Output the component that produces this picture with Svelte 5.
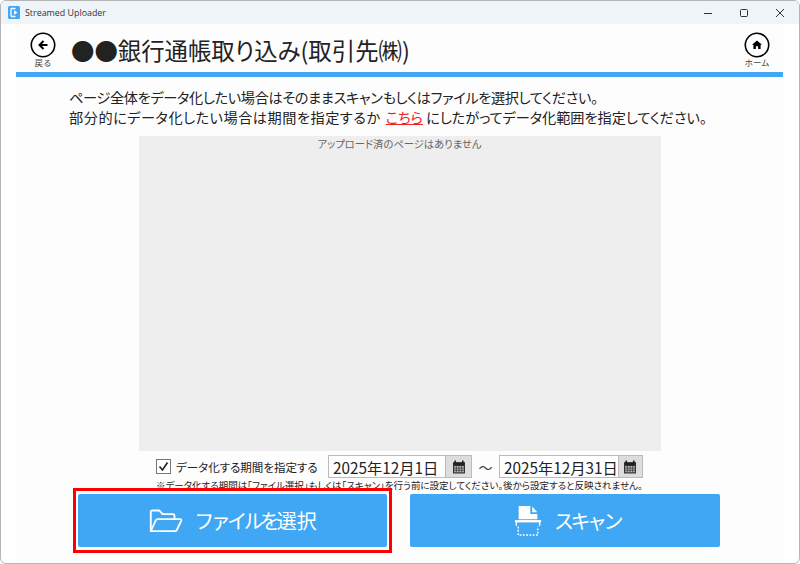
<script>
	const notice = '※データ化する期間は「ファイル選択」もしくは「スキャン」を行う前に設定してください。後から設定すると反映されません。';
</script>

<div class="window">
	<div class="titlebar">
		<svg class="appicon" width="12" height="13" viewBox="0 0 12 13">
			<rect x="0" y="0" width="12" height="13" rx="1.5" fill="#42a7f5" />
			<path d="M3 2.500h4.500M3 10.500h4.500M3 2.500v8" stroke="#fff" stroke-width="1.300" fill="none" />
			<path d="M6 4.200l3.500 2.300L6 8.800z" fill="#fff" />
		</svg>
		<span class="apptitle">Streamed Uploader</span>
		<div class="controls">
			<svg width="10" height="10" viewBox="0 0 10 10"><path d="M1 5.500h8" stroke="#333" stroke-width="1" /></svg>
			<svg width="10" height="10" viewBox="0 0 10 10"><rect x="1.500" y="1.500" width="7" height="7" rx="1" fill="none" stroke="#333" /></svg>
			<svg width="10" height="10" viewBox="0 0 10 10"><path d="M1 1l8 8M9 1l-8 8" stroke="#333" stroke-width="1" /></svg>
		</div>
	</div>

	<main class="content">
		<header class="pagehead">
			<button class="navbtn">
				<svg width="26" height="26" viewBox="0 0 26 26">
					<circle cx="13" cy="13" r="11.700" fill="#fff" stroke="#000" stroke-width="1.600" />
					<path d="M13.500 9l-4 4 4 4M9.500 13h8" fill="none" stroke="#000" stroke-width="2" />
				</svg>
				<span>戻る</span>
			</button>
			<h1>●●銀行通帳取り込み(取引先㈱)</h1>
			<button class="navbtn">
				<svg width="26" height="26" viewBox="0 0 26 26">
					<circle cx="13" cy="13" r="11.700" fill="#fff" stroke="#000" stroke-width="1.600" />
					<path d="M13 8.500l-5 4.300h1.400v4.200h2.500v-2.800h2.200v2.800h2.500v-4.200h1.400z" fill="#000" />
				</svg>
				<span>ホーム</span>
			</button>
		</header>
		<div class="rule"></div>

		<p class="intro">
			<span class="line1">ページ全体をデータ化したい場合はそのままスキャンもしくはファイルを選択してください。</span><br />
			<span class="line2">部分的にデータ化したい場合は期間を指定するか</span> <a href="#top">こちら</a> <span class="line3">にしたがってデータ化範囲を指定してください。</span>
		</p>

		<div class="preview">アップロード済のページはありません</div>

		<div class="period">
			<span class="check">
				<svg width="13" height="13" viewBox="0 0 13 13"><path d="M2.500 6.500l3 3.500 5-7.500" fill="none" stroke="#222" stroke-width="1.600" /></svg>
			</span>
			<span class="checklabel">データ化する期間を指定する</span>
			<div class="datebox">
				<span class="datevalue">2025年12月1日</span>
				<span class="calbtn">{@render calendar()}</span>
			</div>
			<span class="tilde">～</span>
			<div class="datebox">
				<span class="datevalue">2025年12月31日</span>
				<span class="calbtn">{@render calendar()}</span>
			</div>
		</div>
		<p class="notice">{notice}</p>

		<div class="actions">
			<div class="highlight">
				<button class="action">
					<svg width="37" height="28" viewBox="0 0 40 30" fill="none" stroke="#fff" stroke-width="2" stroke-linejoin="round">
						<path d="M3 26V5.500c0-1 .8-1.800 1.800-1.800h7.500l3.500 3.800h11c1 0 1.800.8 1.800 1.800V13" />
						<path d="M3 26l5.500-12c.3-.7 1-1.100 1.700-1.100h24.500c1 0 1.600 1 1.200 1.900L31 25c-.3.600-1 1-1.700 1z" />
					</svg>
					<span><span class="kana">ファイルを</span>選択</span>
				</button>
			</div>
			<button class="action scan">
				<svg width="28" height="34" viewBox="0 0 30 34">
					<path d="M5 15V1H17.500v8.500H25V15z" fill="#fff" />
					<path d="M19.500 1.500l5.500 6h-5.500z" fill="#fff" />
					<rect x="1" y="16" width="28" height="2.500" fill="#fff" />
					<path d="M2.500 18v4M27.500 18v4" stroke="#fff" stroke-width="1.500" />
					<path d="M4.500 23v9h21v-9" fill="none" stroke="#fff" stroke-width="1.500" stroke-dasharray="2 1.500" />
				</svg>
				<span class="kana">スキャン</span>
			</button>
		</div>
	</main>
</div>

{#snippet calendar()}
	<svg width="14" height="14" viewBox="0 0 13 13">
		<path d="M1 2h11v10.500H1z" fill="#222" />
		<path d="M3 .5v2.500M10 .5v2.500" stroke="#222" stroke-width="1.500" />
		<path d="M2 5.500h9v6H2z" fill="#bbb" />
		<path d="M2 7.500h9M2 9.500h9M4 5.500v6M6.500 5.500v6M9 5.500v6" stroke="#222" stroke-width="0.600" />
	</svg>
{/snippet}

<style>
	:global(body) {
		background: #fff;
		font-family: 'Noto Sans CJK JP', 'Liberation Sans', sans-serif;
		font-feature-settings: 'palt';
	}
	.window {
		height: 564px;
		box-sizing: border-box;
		overflow: hidden;
		display: flex;
		flex-direction: column;
		background: #fff;
		border: 1px solid #b5b5b5;
		border-radius: 6px;
	}
	.titlebar {
		flex: none;
		height: 23px;
		display: flex;
		align-items: center;
		padding-left: 7px;
		background: #eff4f9;
	}
	.appicon {
		margin-right: 5px;
	}
	.apptitle {
		font-family: 'Open Sans', 'Liberation Sans', sans-serif;
		font-size: 8.900px;
		color: #333;
	}
	.controls {
		margin-left: auto;
		display: flex;
		gap: 26px;
		padding-right: 14px;
	}
	.controls svg {
		display: block;
	}
	.content {
		flex: 1;
		margin: 0 16px 0 15px;
		background: #fdfdfd;
		display: flex;
		flex-direction: column;
	}
	.pagehead {
		height: 48px;
		display: flex;
		align-items: flex-start;
		padding: 8px 13px 0 14px;
		box-sizing: border-box;
	}
	.navbtn {
		width: 26px;
		border: 0;
		padding: 0;
		background: none;
		display: flex;
		flex-direction: column;
		align-items: center;
		font-family: inherit;
		font-size: 8.500px;
		line-height: 9px;
		color: #444;
		white-space: nowrap;
	}
	.navbtn svg {
		display: block;
	}
	h1 {
		flex: 1;
		margin: 3px 0 0 15px;
		font-size: 23.400px;
		line-height: 30px;
		font-weight: 400;
		color: #222;
	}
	.rule {
		flex: none;
		height: 5px;
		background: #42a7f5;
	}
	.intro {
		margin: 10px 0 0 53px;
		font-size: 14.200px;
		line-height: 20px;
		color: #222;
		white-space: nowrap;
	}
	.line1 {
		letter-spacing: -0.34px;
	}
	.line2 {
		letter-spacing: 0.5px;
	}
	.line3 {
		margin-left: -2px;
		letter-spacing: -0.05px;
	}
	.intro a {
		margin: 0 2px;
		color: #ee2222;
	}
	.preview {
		flex: none;
		align-self: center;
		width: 522px;
		height: 315px;
		margin-top: 9px;
		background: #eeeeee;
		text-align: center;
		font-size: 10.300px;
		line-height: 16px;
		color: #666;
	}
	.period {
		flex: none;
		height: 23px;
		margin-top: 4px;
		padding-left: 140px;
		display: flex;
		align-items: center;
	}
	.check {
		width: 13px;
		height: 13px;
		border: 1px solid #777;
		background: #fff;
		margin-right: 5px;
	}
	.check svg {
		display: block;
	}
	.checklabel {
		width: 152px;
		font-size: 11.500px;
		color: #222;
		white-space: nowrap;
	}
	.datebox {
		height: 23px;
		box-sizing: border-box;
		display: flex;
		align-items: center;
		justify-content: space-between;
		width: 144px;
		border: 1px solid #bbb;
		background: #fff;
	}
	.datevalue {
		padding: 0 0 0 4px;
		font-size: 15.300px;
		color: #222;
		white-space: nowrap;
	}
	.calbtn {
		width: 25px;
		height: 21px;
		display: flex;
		align-items: center;
		justify-content: center;
		background: #dddddd;
		border-left: 1px solid #bbb;
	}
	.tilde {
		width: 27px;
		text-align: center;
		font-size: 14px;
		color: #444;
	}
	.notice {
		margin: 1px 0 0 140px;
		font-size: 9.500px;
		line-height: 12px;
		color: #222;
		white-space: nowrap;
	}
	.actions {
		flex: none;
		margin-top: -3px;
		padding-left: 57px;
		display: flex;
		align-items: center;
	}
	.highlight {
		padding: 3px 2px;
		background: #fff;
		border: 3px solid #f00;
		display: flex;
	}
	.action {
		width: 309px;
		height: 53px;
		border: 0;
		border-radius: 2px;
		padding: 0;
		background: #3fa7f4;
		display: flex;
		align-items: center;
		justify-content: center;
		gap: 9px;
		font-family: inherit;
		font-size: 20px;
		color: #fff;
	}
	.kana {
		letter-spacing: -3.500px;
	}
	.scan {
		margin-left: 18px;
		width: 310px;
		gap: 12px;
		padding-left: 4px;
		box-sizing: border-box;
	}
</style>
